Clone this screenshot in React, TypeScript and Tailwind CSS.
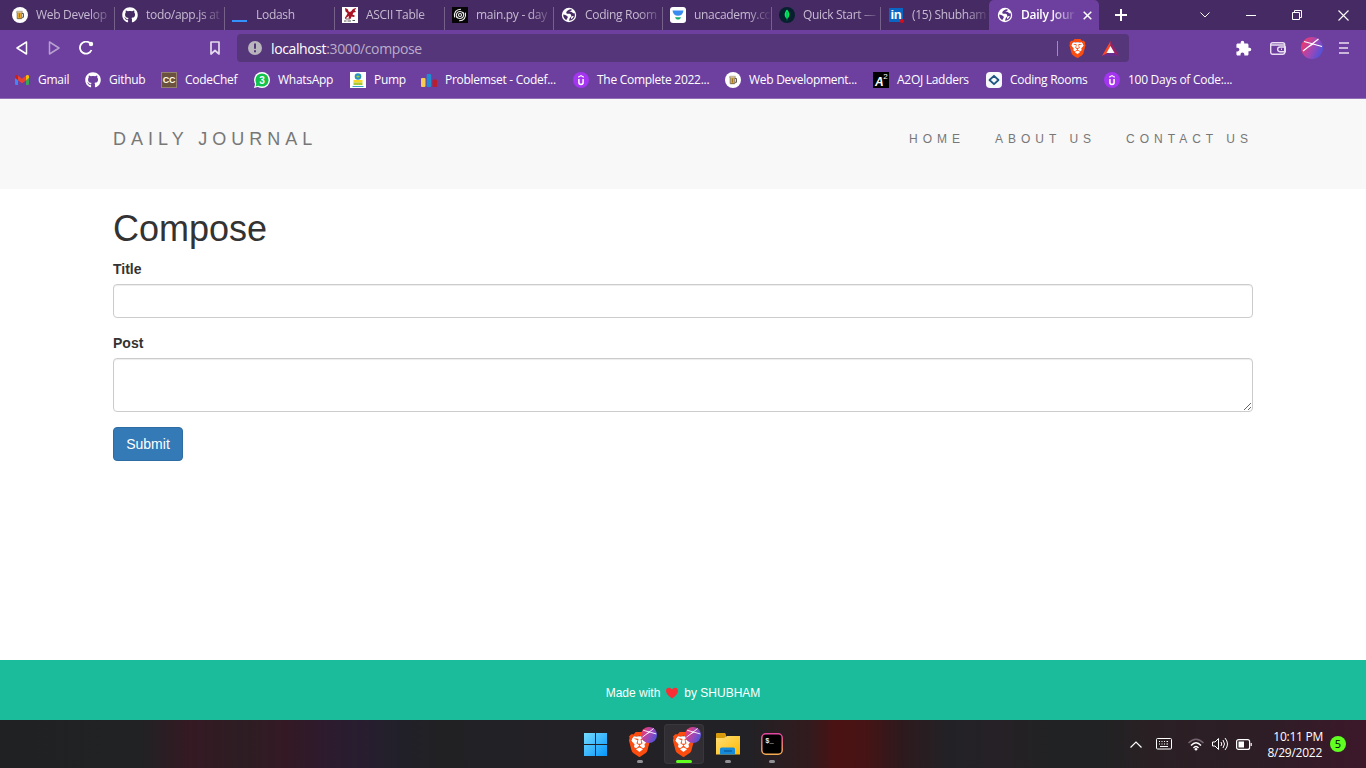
import React from "react";
import { FaGithub } from "react-icons/fa";
import { MdExtension } from "react-icons/md";
import { SiBrave } from "react-icons/si";

const Beer = () => (
  <svg width="16" height="16" viewBox="0 0 16 16">
    <circle cx="8" cy="8" r="8" fill="#fff" />
    <path d="M5.500 5.500h4V12h-4z" fill="#e3a52c" />
    <path d="M10 6.500h1.500v3.800H10" fill="none" stroke="#625b50" />
    <path d="M5.200 4.500h4.600v7.200H5.200z" fill="none" stroke="#625b50" strokeWidth=".8" />
    <path d="M4.800 4.200h5.400v1.500H4.800z" fill="#fff3cf" stroke="#8a7a5a" strokeWidth=".5" />
    <path d="M7.500 6.500v4" stroke="#a8741f" />
  </svg>
);
const GitHub = () => <FaGithub className="size-4 text-white" />;
const Globe = ({ dark = "#462a63" }: { dark?: string }) => (
  <svg width="16" height="16" viewBox="0 0 16 16">
    <circle cx="8" cy="8" r="7.200" fill="#fff" />
    <path d="M9.300 2.300C7.500 3 5.800 3.800 5.300 5.200c-.3 1.200.8 1.600 2.200 1.500 1.500-.1 2.300.3 2.600 1.400.4 1.100-.1 1.800-.8 2.300-.8.600-.8 1.700-1.300 3.300 3.500 0 5.900-2.400 5.900-5.700 0-.7-.1-1.300-.3-1.800-1 .3-1.700-.1-2.200-.8-.8-.7-2.200-.5-3.200-.9 1.500-.3 2.500-1 2.900-1.800Z" fill={dark} />
    <path d="M2.200 7.500c1.500.3 2.800.7 3.900 1.500.9.700.8 1.800.1 2.500-.6.500-.7 1-.7 1.700-2-.9-3.400-3-3.300-5.700Z" fill={dark} />
    <path d="M10.300 9.500c.8-.6 1.700-.7 2.500-.4-.5 1.600-1.600 2.800-3 3.400.6-1.100.1-2.200.5-3Z" fill="#fff" />
  </svg>
);
const Lodash = () => <span className="mt-3 block h-[2px] w-[15px] bg-[#3492ff]" />;
const Ascii = () => (
  <svg width="16" height="16" viewBox="0 0 16 16">
    <path d="M0 0h16v16H0z" fill="#fff" />
    <path d="m3 1 2.500 1L7 5l2-.5L11 2l3.500-1.300-1.800 2.500L14 5l-2.500.5-1 2 2.500 1.300-1 1.200-2.500-.5L8.500 12l-2-.5L7 9 4.500 10.500 4 12.500 2.800 11 5 7.500 5.500 6 3.500 4.500Z" fill="#a81425" />
    <path d="M2 14h2.500m1 0H9m1.500-.5H13" stroke="#555" />
    <path d="M4 12h4" stroke="#8b6d70" />
  </svg>
);
const Replit = () => (
  <svg width="16" height="16" viewBox="0 0 16 16" fill="none" stroke="#f0f0f0" strokeWidth="1.100" strokeLinecap="round">
    <path d="M0 0h16v16H0z" fill="#070707" stroke="none" />
    <circle cx="8" cy="8" r="1.500" />
    <path d="M4.600 10.300C3.500 7.200 5.200 4.500 8 4.500c1.700 0 3 .9 3.500 2.300M11.400 5.700c1.100 3.100-.6 5.800-3.400 5.800-1.700 0-3-.9-3.500-2.300" />
    <path d="M2.600 10C1.700 5.500 4.400 2.300 8.500 2.200M13.400 6c.9 4.500-1.800 7.700-5.900 7.800" />
  </svg>
);
const Unacademy = () => (
  <svg width="16" height="16" viewBox="0 0 16 16">
    <rect width="16" height="16" rx="3" fill="#fff" />
    <path d="M2.500 3.500h11c-.5 3.400-2.300 5.300-5.500 5.300S3 6.900 2.500 3.500Z" fill="#3b8cf0" />
    <path d="M5 10.200h6c-.5 1.600-1.500 2.300-3 2.300s-2.500-.7-3-2.300Z" fill="#17ae74" />
  </svg>
);
const Mongo = () => (
  <svg width="16" height="16" viewBox="0 0 16 16">
    <circle cx="8" cy="8" r="8" fill="#06202e" />
    <path d="M8 2.500c3.300 3.700 3 7 0 9.500-3-2.500-3.300-5.800 0-9.500Z" fill="#00ed64" />
    <path d="M8 5v8.500" stroke="#078a46" strokeWidth=".7" />
  </svg>
);
const LinkedIn = () => (
  <span className="relative ml-px block size-[14px] bg-[#0a66c2] font-['Liberation_Sans'] text-[13px] leading-[14px] font-bold text-white">
    <span className="block text-center tracking-[-0.3px]">in</span>
    <span className="absolute -right-px -bottom-px size-1 rounded-full bg-[#e00b17]" />
  </span>
);
const Gmail = () => (
  <svg width="16" height="16" viewBox="0 0 16 16">
    <path d="M1 4.500 4 6.500V13H2a1 1 0 0 1-1-1Z" fill="#4285f4" />
    <path d="m12 6.500 3-2V12a1 1 0 0 1-1 1h-2Z" fill="#34a853" />
    <path d="m3.500 3.200 4.500 3.600 4.500-3.600v5L8 11.200 3.500 8Z" fill="#ea4335" />
    <path d="M1 4.500C1 2.800 2.700 2.500 4 3.600V8.200L1 6Z" fill="#c5221f" />
    <path d="M15 4.500c0-1.700-1.700-2-3-.9v4.600L15 6Z" fill="#fbbc04" />
  </svg>
);
const CodeChef = () => (
  <span className="block size-4 border border-[#94816d] bg-[#6b523f] text-center font-['Liberation_Sans'] text-[9px] leading-[14px] font-bold text-[#fffbe8]">CC</span>
);
const WhatsApp = () => (
  <svg width="16" height="16" viewBox="0 0 16 16">
    <circle cx="8" cy="8" r="8" fill="#fff" />
    <path d="m0 16 1.300-4.500 3.200 3.200Z" fill="#fff" />
    <circle cx="8" cy="8" r="6.600" fill="#10c34d" />
    <path d="m1.500 14.500 1-3.500 2.500 2.500Z" fill="#10c34d" />
    <text x="8" y="11.700" fill="#fff" fontFamily="Liberation Sans" fontWeight="700" fontSize="10" textAnchor="middle">3</text>
  </svg>
);
const Pump = () => (
  <svg width="16" height="16" viewBox="0 0 16 16">
    <path d="M0 0h16v16H0z" fill="#fff" />
    <circle cx="8" cy="4.500" r="3.300" fill="#2b93bf" />
    <path d="M6 4.500 8 3.500l2 1-2 1.200Z" fill="#a3cf3d" />
    <path d="M3.500 8h9v2.500h-9z" fill="#f8d725" />
    <path d="M3.500 10.500h9V13h-9z" fill="#adc936" />
    <path d="M2.500 14h11v1h-11z" fill="#35a7c0" />
  </svg>
);
const Codeforces = () => (
  <svg width="16" height="16" viewBox="0 0 16 16">
    <rect y="6" width="4.500" height="9" rx="1" fill="#f6cb50" />
    <rect x="5.700" y="2" width="4.500" height="13" rx="1" fill="#1f8bd1" />
    <rect x="11.500" y="7.500" width="4.500" height="7.500" rx="1" fill="#b81e2b" />
  </svg>
);
const Udemy = () => (
  <svg width="16" height="16" viewBox="0 0 16 16" fill="none" stroke="#fff">
    <circle cx="8" cy="8" r="8" fill="#a435f0" stroke="none" />
    <path d="M5.900 7v3.500c0 1.300.8 1.900 2.100 1.900s2.100-.6 2.100-1.900V7" strokeWidth="1.500" />
    <path d="m5.200 5.300 2.800-1.700 2.800 1.700" strokeWidth="1.200" />
  </svg>
);
const Ladder = () => (
  <svg width="16" height="16" viewBox="0 0 16 16">
    <path d="M0 0h16v16H0z" fill="#000" />
    <text x="2" y="14" fill="#fff" fontFamily="Liberation Sans" fontStyle="italic" fontWeight="700" fontSize="12">A</text>
    <text x="10.300" y="7" fill="#fff" fontFamily="Liberation Sans" fontSize="8">2</text>
  </svg>
);
const Rooms = () => (
  <svg width="16" height="16" viewBox="0 0 16 16">
    <rect width="16" height="16" rx="4" fill="#f7f8fa" />
    <path d="M8 3.800 12.500 8 8 12.200 3.500 8Z" fill="none" stroke="#1e5582" strokeWidth="1.800" strokeLinejoin="round" />
  </svg>
);

const tabs = [
  { t: "Web Develop", i: <Beer />, w: "w-[110px]" },
  { t: "todo/app.js at", i: <GitHub />, w: "w-[110px]" },
  { t: "Lodash", i: <Lodash />, w: "w-[110px]" },
  { t: "ASCII Table", i: <Ascii />, w: "w-[110px]" },
  { t: "main.py - day", i: <Replit />, w: "w-[109px]" },
  { t: "Coding Room", i: <Globe />, w: "w-[109px]" },
  { t: "unacademy.co", i: <Unacademy />, w: "w-[109px]" },
  { t: "Quick Start —", i: <Mongo />, w: "w-[109px]" },
  { t: "(15) Shubham", i: <LinkedIn />, w: "w-[108px]" },
];

const bookmarks = [
  { t: "Gmail", i: <Gmail />, w: "w-[71px]" },
  { t: "Github", i: <GitHub />, w: "w-[76px]" },
  { t: "CodeChef", i: <CodeChef />, w: "w-[93px]" },
  { t: "WhatsApp", i: <WhatsApp />, w: "w-[96px]" },
  { t: "Pump", i: <Pump />, w: "w-[71px]" },
  { t: "Problemset - Codef...", i: <Codeforces />, w: "w-[152px]" },
  { t: "The Complete 2022...", i: <Udemy />, w: "w-[152px]" },
  { t: "Web Development...", i: <Beer />, w: "w-[148px]" },
  { t: "A2OJ Ladders", i: <Ladder />, w: "w-[113px]" },
  { t: "Coding Rooms", i: <Rooms />, w: "w-[118px]" },
  { t: "100 Days of Code:...", i: <Udemy />, w: "w-[140px]" },
];

function Brave({ className }: { className: string }) {
  return (
    <svg viewBox="2 0 20 24" className={className}>
      <path d="M6 4h12l2 4-3 10-5 4-5-4L4 8Z" fill="#fff" />
      <SiBrave width="24" height="24" size={24} color="#fb4d10" />
    </svg>
  );
}

function Sphere({ className, id }: { className: string; id: string }) {
  return (
    <svg viewBox="0 0 22 22" className={className}>
      <defs>
        <linearGradient id={id} x1="0" y1=".3" x2="1" y2=".8">
          <stop stopColor="#f03a6a" />
          <stop offset=".5" stopColor="#a247b6" />
          <stop offset="1" stopColor="#4054dd" />
        </linearGradient>
      </defs>
      <circle cx="11" cy="11" r="11" fill={`url(#${id})`} />
      <path d="M2 14 17.500 2M3 4.500l18 5M8 9.500 12 7" fill="none" stroke="#fff" strokeWidth="1.200" />
    </svg>
  );
}

function TabStrip() {
  return (
    <div className="flex h-[30px] bg-[#462a63] pl-[5px] text-[12px] tracking-[-0.1px] text-[#c6bad2]">
      {tabs.map((tab, n) => (
        <div key={tab.t} className={`flex shrink-0 items-center pl-[7px] ${tab.w}`}>
          <span className="flex w-6 shrink-0">{tab.i}</span>
          <span className="w-[76px] overflow-hidden tracking-[-0.3px] whitespace-nowrap [mask-image:linear-gradient(90deg,#000_54px,transparent_78px)]">{tab.t}</span>
          {n < 8 && <span className="mt-[7px] ml-auto h-[23px] w-px bg-[#75618a]" />}
        </div>
      ))}
      <div className="flex w-[110px] shrink-0 items-center rounded-t-[5px] bg-[#6d3f9f] pl-2 font-semibold text-white">
        <span className="w-6 shrink-0"><Globe dark="#5d3590" /></span>
        <span className="w-[56px] overflow-hidden tracking-[-0.25px] whitespace-nowrap [mask-image:linear-gradient(90deg,#000_30px,transparent_56px)]">Daily Jour</span>
        <svg className="ml-[6px]" width="9" height="9" viewBox="0 0 9 9" stroke="#fff" strokeWidth="1.500"><path d="m.7.7 7.600 7.600m0-7.600L.7 8.300" /></svg>
      </div>
      <svg className="mt-[9px] ml-[16px] shrink-0" width="12" height="12" viewBox="0 0 12 12" stroke="#fff" strokeWidth="2"><path d="M6 0v12M0 6h12" /></svg>
      <div className="ml-auto flex shrink-0 items-center pr-[17px] text-white">
        <svg width="10" height="6" viewBox="0 0 10 6" fill="none" stroke="currentColor"><path d="m.5.5 4.500 4.500L9.500.5" /></svg>
        <span className="ml-9 h-px w-[10px] bg-white" />
        <svg className="ml-9" width="10" height="10" viewBox="0 0 10 10" fill="none" stroke="currentColor"><path d="M.5 2.500h7v7h-7zM2.500 2.500v-2h7v7h-2" /></svg>
        <svg className="ml-9" width="11" height="11" viewBox="0 0 11 11" stroke="currentColor" strokeWidth="1.100"><path d="m.5.5 10 10m0-10-10 10" /></svg>
      </div>
    </div>
  );
}

function Toolbar() {
  return (
    <div className="flex h-9 items-center pl-[16px] text-white">
      <svg width="12" height="14" viewBox="0 0 12 14" fill="none" stroke="currentColor" strokeWidth="1.500" strokeLinejoin="round"><path d="M10.500 1v12L1 7Z" /></svg>
      <svg className="ml-5 opacity-50" width="12" height="14" viewBox="0 0 12 14" fill="none" stroke="currentColor" strokeWidth="1.500" strokeLinejoin="round"><path d="M1.500 1v12L11 7Z" /></svg>
      <svg className="ml-[19px]" width="15" height="14" viewBox="0 0 15 14" fill="none" stroke="currentColor" strokeWidth="1.800"><path d="M11 2.200A6 6 0 1 0 12.500 9" /><circle cx="12" cy="3" r="2.200" fill="currentColor" stroke="none" /></svg>
      <svg className="ml-[116px]" width="10" height="14" viewBox="0 0 10 14" fill="none" stroke="#e4d9ec" strokeWidth="1.700" strokeLinejoin="round"><path d="M1 1h8v12L5 9.500 1 13Z" /></svg>
      <div className="ml-[17px] flex h-7 w-[892px] items-center rounded-[4px] bg-[#55367a] pl-[11px]">
        <svg width="14" height="14" viewBox="0 0 14 14"><circle cx="7" cy="7" r="7" fill="#b8b5bd" /><path d="M6 2.500h2v5.300H6zM6 9.200h2v2H6z" fill="#55367a" /></svg>
        <span className="ml-[9px] text-[14px] tracking-[-0.38px] text-white">localhost<span className="text-[#bbaeca]">:3000/compose</span></span>
        <span className="ml-auto h-[15px] w-px bg-[#a08fb4]" />
        <Brave className="ml-[11px] h-[19px] w-[17px]" />
        <svg className="mr-[10px] ml-4" width="17" height="15" viewBox="0 0 17 15"><path d="M8.500 0 0 15l8.500-4.500Z" fill="#ff4724" /><path d="m8.500 0 8.500 15-8.500-4.500Z" fill="#9e1f63" /><path d="m0 15 8.500-4L17 15Z" fill="#662d91" /><path d="m8.500 5 4 7h-8Z" fill="#fff" /></svg>
      </div>
      <MdExtension className="ml-[106px] size-[17px]" />
      <svg className="ml-[18px]" width="16" height="13" viewBox="0 0 16 13" fill="none" stroke="#eadff1" strokeWidth="1.400"><rect x=".7" y=".7" width="14" height="11.600" rx="2" /><path d="M1 3h13.500M15.300 5H10a2.200 2.200 0 0 0 0 4.700h5.300ZM11 7.300h1" /></svg>
      <Sphere id="profile" className="ml-[15px] size-[22px]" />
      <svg className="ml-4" width="10" height="12" viewBox="0 0 10 12" stroke="#eadff1" strokeWidth="1.700"><path d="M0 1h10M0 6h9M0 11h10" /></svg>
    </div>
  );
}

function Field({ label, tall }: { label: string; tall?: boolean }) {
  return (
    <label className="block">
      <span className="mb-[5px] block text-[14px] leading-5 font-bold">{label}</span>
      {tall ? (
        <textarea className="block h-[54px] w-full resize-y rounded border border-[#ccc] bg-white px-3 py-1.5 shadow-[inset_0_1px_1px_rgba(0,0,0,.075)]" />
      ) : (
        <input className="block h-[34px] w-full rounded border border-[#ccc] bg-white px-3 shadow-[inset_0_1px_1px_rgba(0,0,0,.075)]" />
      )}
    </label>
  );
}

function Journal() {
  return (
    <div className="flex h-[621px] flex-col bg-white font-['Liberation_Sans',sans-serif] text-[#333]">
      <header className="flex h-[90px] shrink-0 justify-between bg-[#f8f8f8] pt-[30px] pr-[98px] pl-[113px] text-[#777]">
        <div className="text-[18px] leading-5 tracking-[5px]">DAILY JOURNAL</div>
        <nav className="flex text-[12px] leading-5 tracking-[5px]">
          <a className="px-[15px]">HOME</a>
          <a className="px-[15px]">ABOUT US</a>
          <a className="px-[15px]">CONTACT US</a>
        </nav>
      </header>
      <main className="flex-1 px-[113px] pt-5">
        <h1 className="mb-[10px] text-[36px] leading-10">Compose</h1>
        <form className="flex flex-col gap-[15px]">
          <Field label="Title" />
          <Field label="Post" tall />
          <button type="button" className="h-[34px] w-[70px] rounded border border-[#2e6da4] bg-[#337ab7] text-[14px] text-white">Submit</button>
        </form>
      </main>
      <footer className="flex h-[60px] shrink-0 items-center justify-center bg-[#1abc9c] pt-[5px] text-[12px] text-white">
        Made with
        <svg className="mx-[6px]" width="12" height="12" viewBox="0 0 12 12"><path d="M6 11.500C2 8.800 0 6.500 0 3.800 0 .2 4 0 6 2.500 8 0 12 .2 12 3.800c0 2.700-2 5-6 7.700Z" fill="#f92f35" /></svg>
        by SHUBHAM
      </footer>
    </div>
  );
}

function TaskIcon({ children, active, running = true }: { children: React.ReactNode; active?: boolean; running?: boolean }) {
  return (
    <div className={`relative flex size-10 items-center justify-center rounded-[4px] ${active ? "bg-[#302e33] inset-ring inset-ring-[#39373c]" : ""}`}>
      {children}
      {running && <span className={`absolute bottom-[1px] h-[3px] rounded-full ${active ? "w-4 bg-[#61ff21]" : "w-[6px] bg-[#929095]"}`} />}
    </div>
  );
}

function BraveApp({ id }: { id: string }) {
  return (
    <div className="relative size-7">
      <Brave className="absolute top-[2px] left-[3px] h-[25px] w-[21px]" />
      <Sphere id={id} className="absolute -top-[3px] left-[15px] size-4" />
    </div>
  );
}

function Taskbar() {
  return (
    <div className="flex h-12 items-center bg-[linear-gradient(90deg,#202122_0px,#202223_140px,#351923_190px,#2d1d23_240px,#341924_285px,#2c1b2f_330px,#281d30_360px,#212029_400px,#212124_440px,#232126_560px,#222125_750px,#321a1d_810px,#4b1213_835px,#471314_865px,#2e191d_900px,#222226_950px,#262126_1000px,#202223_1060px,#202223_1100px,#2a2024_1150px,#2e1d26_1270px,#3d182a_1366px)] text-white">
      <div className="ml-[576px] flex shrink-0 gap-1">
        <TaskIcon running={false}>
          <svg width="24" height="24" viewBox="0 0 24 24"><defs><linearGradient id="windows" x1="0" y1="0" x2="1" y2="1"><stop stopColor="#75dcff" /><stop offset="1" stopColor="#0696fa" /></linearGradient></defs><path d="M0 1h11v11H0zM12 1h11v11H12zM0 13h11v11H0zM12 13h11v11H12z" fill="url(#windows)" /></svg>
        </TaskIcon>
        <TaskIcon><BraveApp id="brave-one" /></TaskIcon>
        <TaskIcon active><BraveApp id="brave-two" /></TaskIcon>
        <TaskIcon>
          <svg width="24" height="22" viewBox="0 0 24 22"><defs><linearGradient id="folder" x1="0" y1="0" x2="1" y2="1"><stop stopColor="#ffe07a" /><stop offset="1" stopColor="#ffb900" /></linearGradient></defs><path d="M0 1q0-1 1-1h8l1 1.500V5H0z" fill="#d99b0b" /><path d="M0 5h8l3-2h13v18.500H0Z" fill="url(#folder)" /><path d="M4 21.500V16q0-1.500 1.500-1.500h12Q19 14.500 19 16v5.500Z" fill="#158bd9" /><path d="M8 18h8" stroke="#0860a8" strokeWidth="1.500" /></svg>
        </TaskIcon>
        <TaskIcon>
          <svg width="22" height="22" viewBox="0 0 22 22"><defs><linearGradient id="terminal" x1="0" y1="0" x2="0" y2="1"><stop stopColor="#e246a1" /><stop offset="1" stopColor="#f5ac50" /></linearGradient></defs><rect x=".8" y=".8" width="20.400" height="20.400" rx="4" fill="#000" stroke="url(#terminal)" strokeWidth="1.500" /><text x="4.300" y="9.500" fill="#eee" fontFamily="Liberation Mono" fontWeight="700" fontSize="7">$_</text></svg>
        </TaskIcon>
      </div>
      <div className="ml-auto flex shrink-0 items-center pr-5">
        <svg width="12" height="7" viewBox="0 0 12 7" fill="none" stroke="#fff" strokeWidth="1.200"><path d="m.5 6.500 5.500-5.500 5.500 5.500" /></svg>
        <svg className="ml-[14px]" width="16" height="12" viewBox="0 0 16 12" fill="none" stroke="#fff"><rect x=".5" y=".5" width="15" height="10.500" rx="1" /><path d="M3 3.500h1m1.500 0h1m1.500 0h1m1.500 0H12M3 6h1m1.500 0h1m1.500 0h1m1.500 0H12M4 8.500h8" /></svg>
        <svg className="ml-4" width="16" height="13" viewBox="0 0 16 13" fill="none" stroke="#fff" strokeWidth="1.400"><path d="M.5 5Q8-2.500 15.500 5" stroke="#746570" /><path d="M3 7.500Q8 2 13 7.500M5.500 10Q8 7 10.500 10" /><circle cx="8" cy="11.300" r="1.300" fill="#fff" stroke="none" /></svg>
        <svg className="ml-2" width="16" height="14" viewBox="0 0 16 14" fill="none" stroke="#fff"><path d="M.5 5H3l3.500-3.500v11L3 9H.5ZM9 5q1.500 2 0 4M11 3q3 4 0 8M13 1q5 6 0 12" /></svg>
        <svg className="ml-2" width="16" height="11" viewBox="0 0 16 11" fill="none" stroke="#fff" strokeWidth="1.200"><rect x=".6" y=".6" width="13" height="9.800" rx="2" /><path d="M2.500 2.500h5.500v6H2.500z" fill="#fff" stroke="none" /><path d="M15.200 4v3" /></svg>
        <div className="ml-[13px] w-[57px] pt-px text-right text-[12px] leading-4 tracking-[-0.25px] whitespace-nowrap"><div className="-mr-px">10:11 PM</div><div>8/29/2022</div></div>
        <span className="ml-2 flex size-4 items-center justify-center rounded-full bg-[#61ff21] text-[11px] text-black">5</span>
      </div>
    </div>
  );
}

export default function App() {
  return (
    <div className="h-[768px] w-[1366px] overflow-hidden font-['Open_Sans','Noto_Sans',sans-serif]">
      <div className="h-[99px] border-b border-[#9270b8] bg-[#6d3f9f]">
        <TabStrip />
        <Toolbar />
        <div className="flex h-7 items-center pl-[14px] text-[12px] tracking-[-0.28px] text-white">
          {bookmarks.map((b) => (
            <div key={b.t} className={`flex shrink-0 items-center gap-2 whitespace-nowrap ${b.w}`}>
              <span className="flex w-4 shrink-0">{b.i}</span><span>{b.t}</span>
            </div>
          ))}
        </div>
      </div>
      <Journal />
      <Taskbar />
    </div>
  );
}
